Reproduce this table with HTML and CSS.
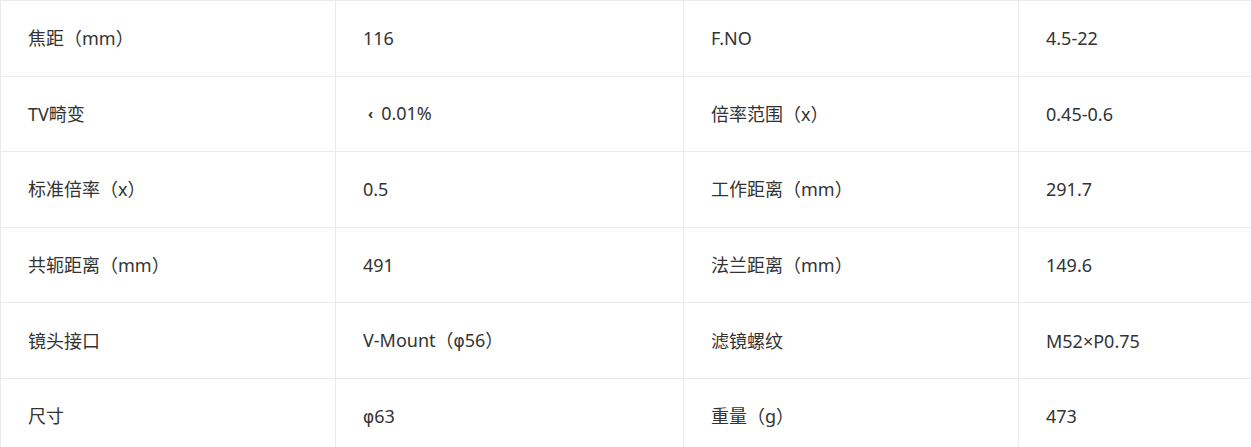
FILE: index.html
```html
<!DOCTYPE html>
<html lang="zh">
<head>
<meta charset="utf-8">
<link rel="stylesheet" href="styles.css">
</head>
<body>
<table class="spec">
  <colgroup>
    <col class="c1"><col class="c2"><col class="c3"><col class="c4">
  </colgroup>
  <tbody>
    <tr><td>焦距（mm）</td><td>116</td><td>F.NO</td><td>4.5-22</td></tr>
    <tr><td>TV畸变</td><td><span class="lt">‹</span>0.01%</td><td>倍率范围（x）</td><td>0.45-0.6</td></tr>
    <tr><td>标准倍率（x）</td><td>0.5</td><td>工作距离（mm）</td><td>291.7</td></tr>
    <tr><td>共轭距离（mm）</td><td>491</td><td>法兰距离（mm）</td><td>149.6</td></tr>
    <tr><td>镜头接口</td><td>V-Mount（<span class="phi">φ</span>56）</td><td>滤镜螺纹</td><td>M52×P0.75</td></tr>
    <tr><td>尺寸</td><td><span class="phi">φ</span>63</td><td>重量（g）</td><td>473</td></tr>
  </tbody>
</table>
</body>
</html>
```
FILE: styles.css
```css
html, body {
  margin: 0;
  padding: 0;
  background: #fff;
  overflow: hidden;
}
.spec {
  border-collapse: collapse;
  table-layout: fixed;
  width: 1252px;
  font-family: "Noto Sans", "Noto Sans CJK SC", sans-serif;
  font-size: 18px;
  color: #333;
}
.c1 { width: 335px; }
.c2 { width: 348px; }
.c3 { width: 335px; }
.c4 { width: 234px; }
.spec td {
  border: 1px solid #ebebeb;
  height: 75.6px;
  padding: 0 0 0 27px;
  box-sizing: border-box;
  vertical-align: middle;
  line-height: 24px;
  white-space: nowrap;
}
.lt {
  display: inline-block;
  font-size: 14px;
  font-weight: 700;
  margin: 0 8px 0 5px;
  vertical-align: 1px;
}
.phi {
  font-family: "DejaVu Sans", sans-serif;
  font-size: 17px;
}
```
